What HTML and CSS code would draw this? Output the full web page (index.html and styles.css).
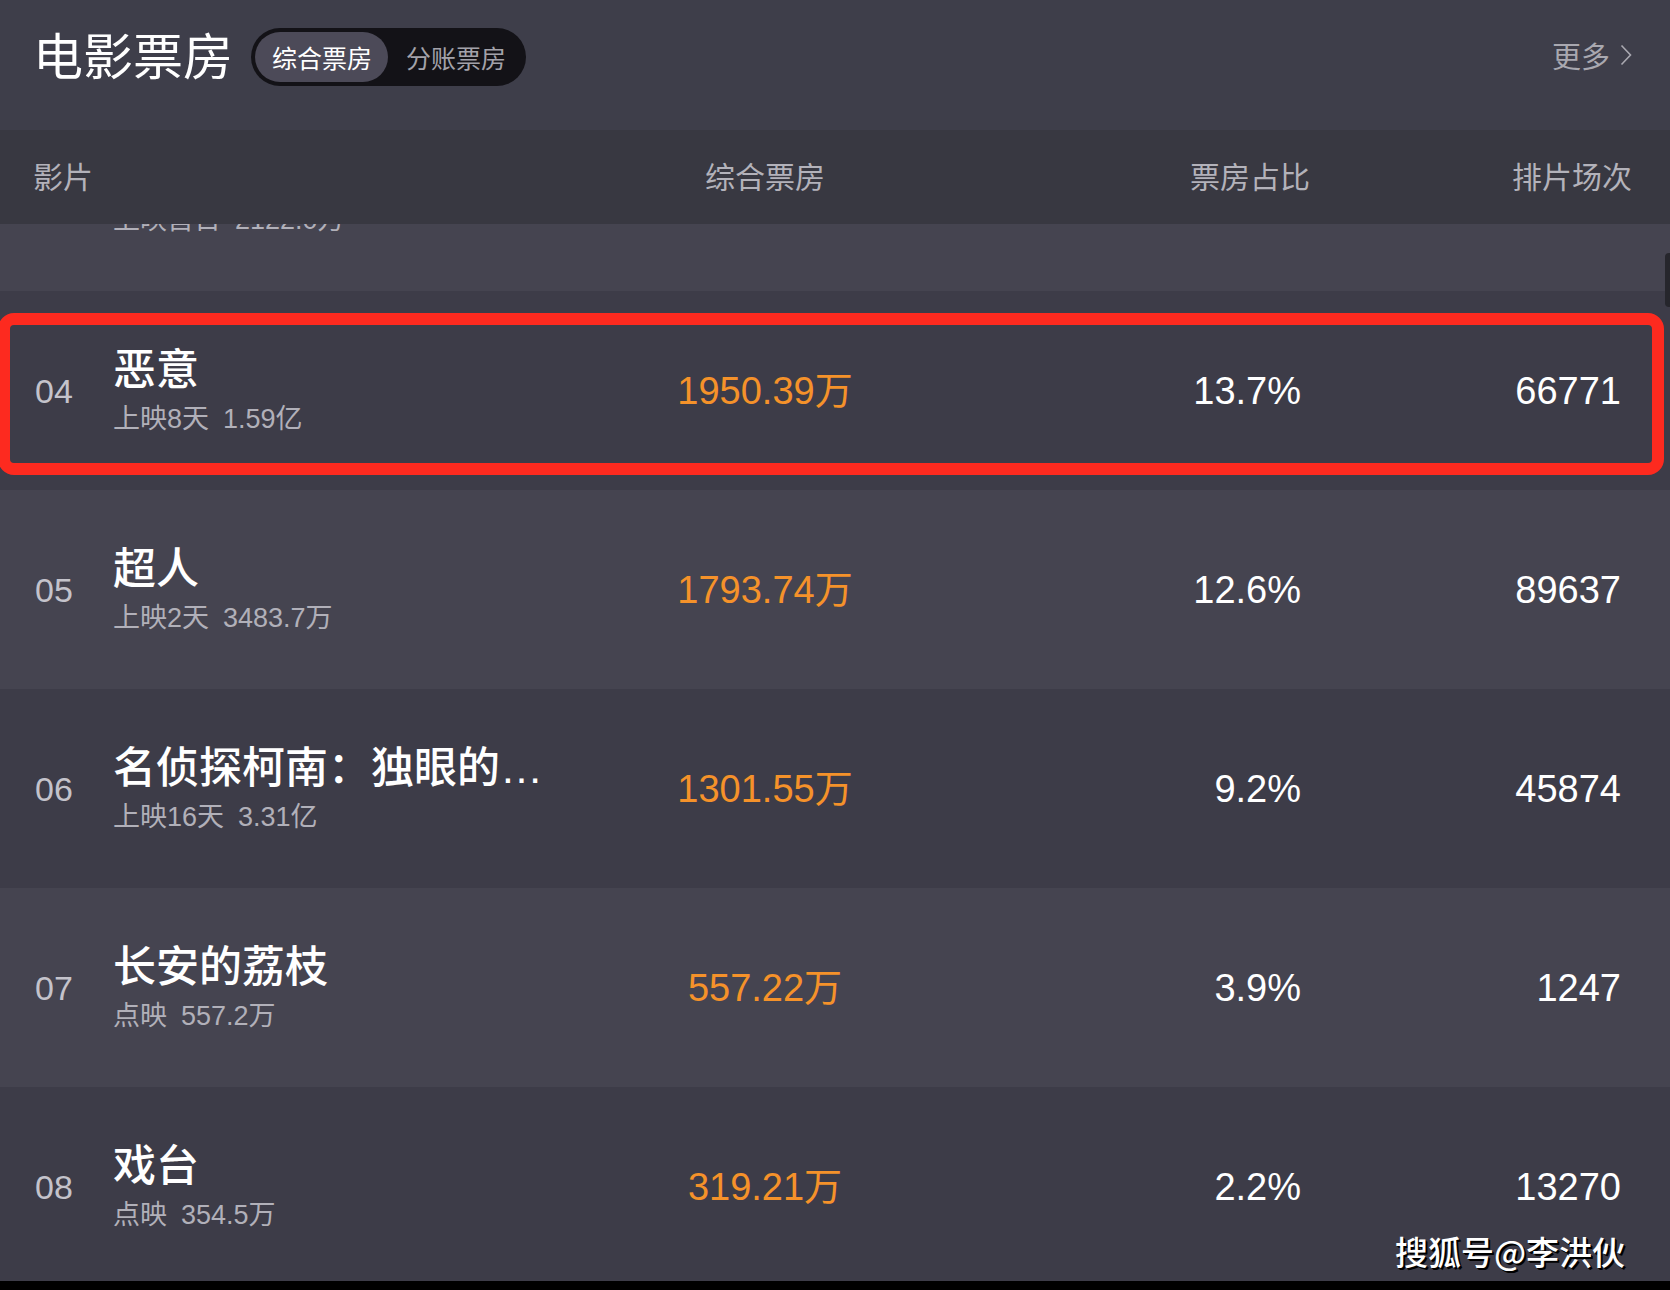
FILE: index.html
```html
<!DOCTYPE html>
<html lang="zh-CN">
<head>
<meta charset="utf-8">
<title>电影票房</title>
<link rel="stylesheet" href="styles.css">
</head>
<body>
<div class="screen">
  <header class="topbar">
    <div class="topbar-left">
      <h1 class="page-title">电影票房</h1>
      <div class="toggle">
        <span class="toggle-item active">综合票房</span>
        <span class="toggle-item">分账票房</span>
      </div>
    </div>
    <a class="more">更多<svg class="chev" width="12" height="22" viewBox="0 0 12 22"><polyline points="1.5,1.5 10.5,11 1.5,20.5" fill="none" stroke="#a9a8b0" stroke-width="1.6"/></svg></a>
  </header>

  <div class="col-head">
    <span class="ch-film">影片</span>
    <span class="ch-gross">综合票房</span>
    <span class="ch-share">票房占比</span>
    <span class="ch-shows">排片场次</span>
  </div>

  <div class="list">
    <div class="rows">
      <div class="row light first">
        <span class="rank"></span>
        <div class="film"><div class="title"></div><div class="sub"><span>上映首日</span><span class="gross">2122.0万</span></div></div>
        <span class="amount"></span>
        <span class="share"></span>
        <span class="shows"></span>
      </div>
      <div class="row dark">
        <span class="rank">04</span>
        <div class="film"><div class="title">恶意</div><div class="sub"><span>上映8天</span><span class="gross">1.59亿</span></div></div>
        <span class="amount">1950.39万</span>
        <span class="share">13.7%</span>
        <span class="shows">66771</span>
      </div>
      <div class="row light">
        <span class="rank">05</span>
        <div class="film"><div class="title">超人</div><div class="sub"><span>上映2天</span><span class="gross">3483.7万</span></div></div>
        <span class="amount">1793.74万</span>
        <span class="share">12.6%</span>
        <span class="shows">89637</span>
      </div>
      <div class="row dark">
        <span class="rank">06</span>
        <div class="film"><div class="title">名侦探柯南：独眼的残像</div><div class="sub"><span>上映16天</span><span class="gross">3.31亿</span></div></div>
        <span class="amount">1301.55万</span>
        <span class="share">9.2%</span>
        <span class="shows">45874</span>
      </div>
      <div class="row light">
        <span class="rank">07</span>
        <div class="film"><div class="title">长安的荔枝</div><div class="sub"><span>点映</span><span class="gross">557.2万</span></div></div>
        <span class="amount">557.22万</span>
        <span class="share">3.9%</span>
        <span class="shows">1247</span>
      </div>
      <div class="row dark">
        <span class="rank">08</span>
        <div class="film"><div class="title">戏台</div><div class="sub"><span>点映</span><span class="gross">354.5万</span></div></div>
        <span class="amount">319.21万</span>
        <span class="share">2.2%</span>
        <span class="shows">13270</span>
      </div>
    </div>
    <div class="scroll-thumb"></div>
    <div class="highlight-box"></div>
  </div>

  <div class="bottom-bar"></div>
  <div class="watermark">搜狐号@李洪伙</div>
</div>
</body>
</html>
```

FILE: styles.css
```css
html, body {
  margin: 0;
  padding: 0;
  background: #3e3e4a;
}

.screen {
  position: relative;
  width: 1670px;
  height: 1290px;
  overflow: hidden;
  font-family: "Liberation Sans", "Noto Sans CJK SC", sans-serif;
  color: #fff;
}

/* ---------- top bar ---------- */
.topbar {
  box-sizing: border-box;
  height: 130px;
  padding: 0 38px 20px 33px;
  display: flex;
  align-items: center;
  justify-content: space-between;
  background: #3e3e4a;
}

.topbar-left {
  display: flex;
  align-items: center;
}

.page-title {
  margin: 0 0 4px 0;
  font-family: "Noto Sans CJK SC", sans-serif;
  font-size: 50px;
  line-height: 1;
  font-weight: 400;
  color: #fff;
}

.toggle {
  margin-left: 18px;
  margin-top: 4px;
  height: 58px;
  box-sizing: border-box;
  padding: 4px;
  display: flex;
  align-items: center;
  background: #131217;
  border-radius: 29px;
}

.toggle-item {
  height: 50px;
  line-height: 50px;
  font-family: "Noto Sans CJK SC", sans-serif;
  font-size: 25px;
  color: #a3a2aa;
  padding: 0 16px 0 18px;
  border-radius: 25px;
}

.toggle-item.active {
  background: #4c4a58;
  color: #fff;
  padding: 0 16px 0 17px;
}

.more {
  display: flex;
  align-items: center;
  font-family: "Noto Sans CJK SC", sans-serif;
  font-size: 29px;
  color: #a9a8b0;
  text-decoration: none;
}

.chev {
  margin-left: 10px;
}

/* ---------- column header ---------- */
.col-head {
  box-sizing: border-box;
  height: 94px;
  padding: 0 38px 4px 33px;
  display: grid;
  grid-template-columns: 557px 350px 370px 1fr;
  align-items: center;
  background: #383841;
  font-family: "Noto Sans CJK SC", sans-serif;
  font-size: 30px;
  color: #b3b2ba;
}

.ch-gross { text-align: center; }
.ch-share { text-align: right; }
.ch-shows { text-align: right; }

/* ---------- list ---------- */
.list {
  position: relative;
  height: 1057px;
  overflow: hidden;
}

.rows {
  margin-top: -132px;
}

.row {
  box-sizing: border-box;
  height: 199px;
  padding-left: 35px;
  display: grid;
  grid-template-columns: 78px 477px 350px 361px 320px;
  align-items: center;
}

.row.light { background: #454450; }
.row.dark { background: #3d3c48; }

.rank {
  font-size: 34px;
  line-height: 40px;
  color: #c4c3cb;
}

.film {
  display: flex;
  flex-direction: column;
  min-width: 0;
}

.title {
  height: 48px;
  line-height: 48px;
  font-size: 43px;
  font-weight: 500;
  color: #fff;
  max-width: 450px;
  white-space: nowrap;
  overflow: hidden;
  text-overflow: ellipsis;
}

.sub {
  margin-top: 9px;
  line-height: 32px;
  font-size: 27px;
  color: #b1b0b9;
  white-space: nowrap;
}

.sub .gross {
  margin-left: 14px;
}

.amount,
.share,
.shows {
  font-size: 38px;
  line-height: 44px;
}

.amount {
  text-align: center;
  color: #f5922a;
}

.share {
  text-align: right;
  color: #fff;
}

.shows {
  text-align: right;
  color: #fff;
}

.scroll-thumb {
  position: absolute;
  right: 0;
  top: 29px;
  width: 5px;
  height: 54px;
  background: #26262c;
  border-radius: 4px 0 0 4px;
}

.highlight-box {
  position: absolute;
  left: -2px;
  top: 89px;
  width: 1666px;
  height: 162px;
  box-sizing: border-box;
  border: 12px solid #fd2a1f;
  border-radius: 16px;
}

.bottom-bar {
  height: 9px;
  background: #000;
}

.watermark {
  position: absolute;
  right: 45px;
  bottom: 22px;
  font-family: "Noto Sans CJK SC", sans-serif;
  font-size: 33px;
  line-height: 1;
  font-weight: 500;
  color: #fff;
  text-shadow: 2px 2px 0 #000, 1px 1px 0 #000;
}
```
